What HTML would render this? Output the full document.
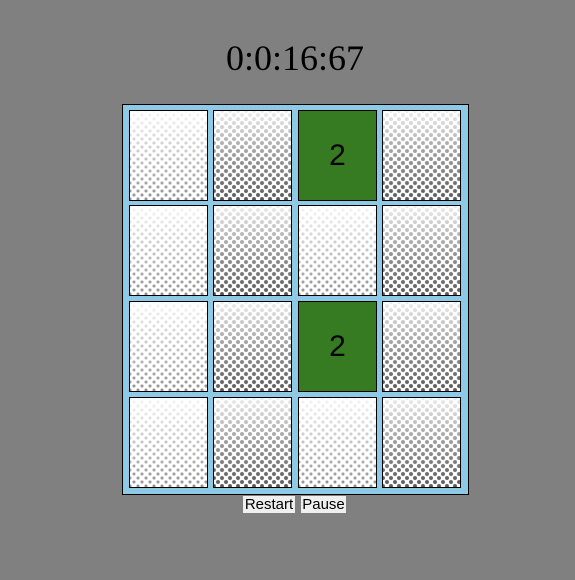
<!DOCTYPE html>
<html><head><style>
html,body{margin:0;padding:0;background:#808080;width:575px;height:580px;overflow:hidden;}
#t{position:absolute;left:0;width:590px;top:37px;text-align:center;font:36px "Liberation Serif",serif;color:#000;}
#b{position:absolute;left:122px;top:104px;width:345px;height:389px;background:#8ecae6;border:1px solid #000;}
.c{position:absolute;width:77px;height:89px;border:1px solid #000;box-sizing:content-box;}
.l{background:linear-gradient(rgba(255,255,255,.95),rgba(255,255,255,.6) 60%,rgba(255,255,255,.35)),radial-gradient(circle,#555 1.2px,transparent 1.9px) 0 0/8px 8px,radial-gradient(circle,#555 1.2px,transparent 1.9px) 4px 4px/8px 8px,#fff;}
.d{background:linear-gradient(rgba(255,255,255,.9),rgba(255,255,255,.45) 50%,rgba(255,255,255,.1)),radial-gradient(circle,#444 1.6px,transparent 2.4px) 0 0/8px 8px,radial-gradient(circle,#444 1.6px,transparent 2.4px) 4px 4px/8px 8px,#fff;}
.g{background:#367a22;font:30px "Liberation Sans",sans-serif;text-align:center;line-height:89px;color:#000;}
.btn{position:absolute;top:496px;height:17px;background:#efefef;font:15px "Liberation Sans",sans-serif;line-height:17px;text-align:center;color:#000;}
</style></head><body>
<div id="t">0:0:16:67</div>
<div id="b"></div>
<div class="c l" style="left:129px;top:110px"></div>
<div class="c d" style="left:213px;top:110px"></div>
<div class="c g" style="left:298px;top:110px">2</div>
<div class="c d" style="left:382px;top:110px"></div>
<div class="c l" style="left:129px;top:205px"></div>
<div class="c d" style="left:213px;top:205px"></div>
<div class="c l" style="left:298px;top:205px"></div>
<div class="c d" style="left:382px;top:205px"></div>
<div class="c l" style="left:129px;top:301px"></div>
<div class="c d" style="left:213px;top:301px"></div>
<div class="c g" style="left:298px;top:301px">2</div>
<div class="c d" style="left:382px;top:301px"></div>
<div class="c l" style="left:129px;top:397px"></div>
<div class="c d" style="left:213px;top:397px"></div>
<div class="c l" style="left:298px;top:397px"></div>
<div class="c d" style="left:382px;top:397px"></div>
<div class="btn" style="left:243px;width:52px">Restart</div>
<div class="btn" style="left:301px;width:45px">Pause</div>
</body></html>
